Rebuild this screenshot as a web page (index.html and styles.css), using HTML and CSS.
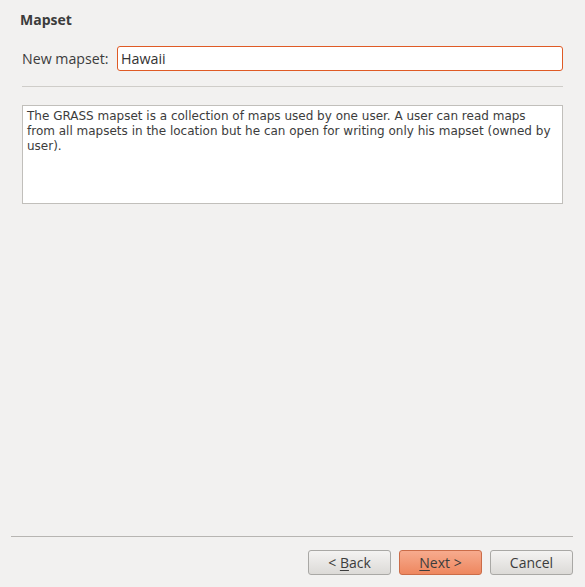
FILE: index.html
```
<!DOCTYPE html>
<html>
<head>
<meta charset="utf-8">
<link rel="stylesheet" href="styles.css">
</head>
<body>
<div class="page">
  <div class="content">
    <div class="title">Mapset</div>
    <div class="row">
      <label class="label">New mapset:</label>
      <div class="input">Hawaii</div>
    </div>
    <div class="sep"></div>
    <div class="desc">The GRASS mapset is a collection of maps used by one user. A user can read maps<br>from all mapsets in the location but he can open for writing only his mapset (owned by<br>user).</div>
  </div>
  <div class="footer">
    <div class="sep2"></div>
    <div class="buttons">
      <div class="btn">&lt; <u>B</u>ack</div>
      <div class="btn primary"><u>N</u>ext &gt;</div>
      <div class="btn">Cancel</div>
    </div>
  </div>
</div>
</body>
</html>
```
FILE: styles.css
```
html, body {
  margin: 0;
  padding: 0;
  background: #f2f1f0;
}
.page {
  width: 585px;
  height: 587px;
  display: flex;
  flex-direction: column;
  justify-content: space-between;
  font-family: "Open Sans", "DejaVu Sans", sans-serif;
  color: #3c3c3c;
}
.content {
  padding: 11px 22px 0 22px;
}
.title {
  font-weight: bold;
  font-size: 14px;
  margin-left: -2px;
  height: 18px;
  line-height: 18px;
}
.row {
  display: flex;
  align-items: center;
  margin-top: 17px;
  gap: 7px;
}
.label {
  font-size: 14.2px;
  width: 88px;
  white-space: nowrap;
}
.input {
  flex: 1;
  height: 23px;
  line-height: 23px;
  border: 1px solid #df5a25;
  border-radius: 3px;
  background: #fff;
  font-size: 14.3px;
  padding-left: 3px;
  color: #333;
}
.sep {
  height: 1px;
  background: #cfcdc9;
  margin-top: 15px;
}
.desc {
  margin-top: 18px;
  height: 91px;
  border: 1px solid #c1bfbb;
  background: #fff;
  font-family: "DejaVu Sans", sans-serif;
  font-size: 12px;
  line-height: 15px;
  padding: 3px 4px;
  color: #3c3c3c;
  white-space: nowrap;
}
.footer {
  padding: 0 12px 12px 11px;
}
.sep2 {
  height: 1px;
  background: #b7b5b2;
}
.buttons {
  display: flex;
  justify-content: flex-end;
  gap: 8px;
  margin-top: 13px;
}
.btn {
  width: 81px;
  height: 23px;
  line-height: 23px;
  text-align: center;
  border: 1px solid #a9a8a5;
  border-radius: 3px;
  background: linear-gradient(#f4f3f2, #dcdad7);
  font-size: 14px;
  color: #3c3c3c;
}
.btn u {
  text-underline-offset: 2px;
}
.primary {
  border-color: #cb6c48;
  background: linear-gradient(#f7ab8e, #ee875f);
}
```
